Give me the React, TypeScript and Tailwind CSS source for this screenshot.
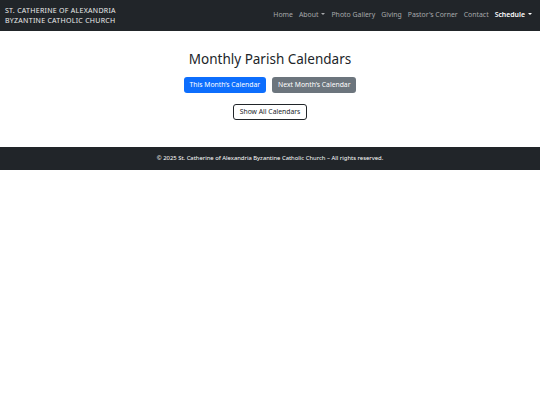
const NAV_LINKS: { label: string; caret?: boolean; active?: boolean }[] = [
  { label: 'Home' },
  { label: 'About', caret: true },
  { label: 'Photo Gallery' },
  { label: 'Giving' },
  { label: "Pastor's Corner" },
  { label: 'Contact' },
  { label: 'Schedule', caret: true, active: true },
];

function Caret() {
  return <span className="ml-[3px] inline-block border-x-[2px] border-t-[2.5px] border-x-transparent border-t-current align-[2px]" />;
}

function Navbar() {
  return (
    <header className="flex h-[31px] items-center justify-between bg-[#212529] pl-[5px] pr-[8px]">
      <div className="text-[7px] uppercase leading-[10px] tracking-[0.04em] text-[#ececec]">
        St. Catherine of Alexandria
        <br />
        Byzantine Catholic Church
      </div>
      <nav className="flex items-center gap-[6px] text-[6.9px]">
        {NAV_LINKS.map((l) => (
          <span key={l.label} className={l.active ? 'font-semibold text-white' : 'text-[#a7a9ab]'}>
            {l.label}
            {l.caret && <Caret />}
          </span>
        ))}
      </nav>
    </header>
  );
}

export default function App() {
  return (
    <div className="min-h-[405px] bg-white font-['Noto_Sans',sans-serif] text-[#212529]">
      <Navbar />
      <main className="flex flex-col items-center pb-[27px] pt-[16px]">
        <h2 className="text-[13.5px] leading-[24px]">Monthly Parish Calendars</h2>
        <div className="mt-[6px] flex gap-[6px]">
          <button className="h-[16px] rounded-[3px] bg-[#0d6efd] px-[6px] text-[6.8px] text-white">This Month’s Calendar</button>
          <button className="h-[16px] rounded-[3px] bg-[#6c757d] px-[6px] text-[6.8px] text-white">Next Month’s Calendar</button>
        </div>
        <button className="mt-[11px] h-[16px] rounded-[3px] border border-[#212529] px-[6px] text-[6.8px] text-[#212529]">
          Show All Calendars
        </button>
      </main>
      <footer className="flex h-[23px] items-center justify-center bg-[#212529] text-[5.9px] text-white">
        © 2025 St. Catherine of Alexandria Byzantine Catholic Church – All rights reserved.
      </footer>
    </div>
  );
}
